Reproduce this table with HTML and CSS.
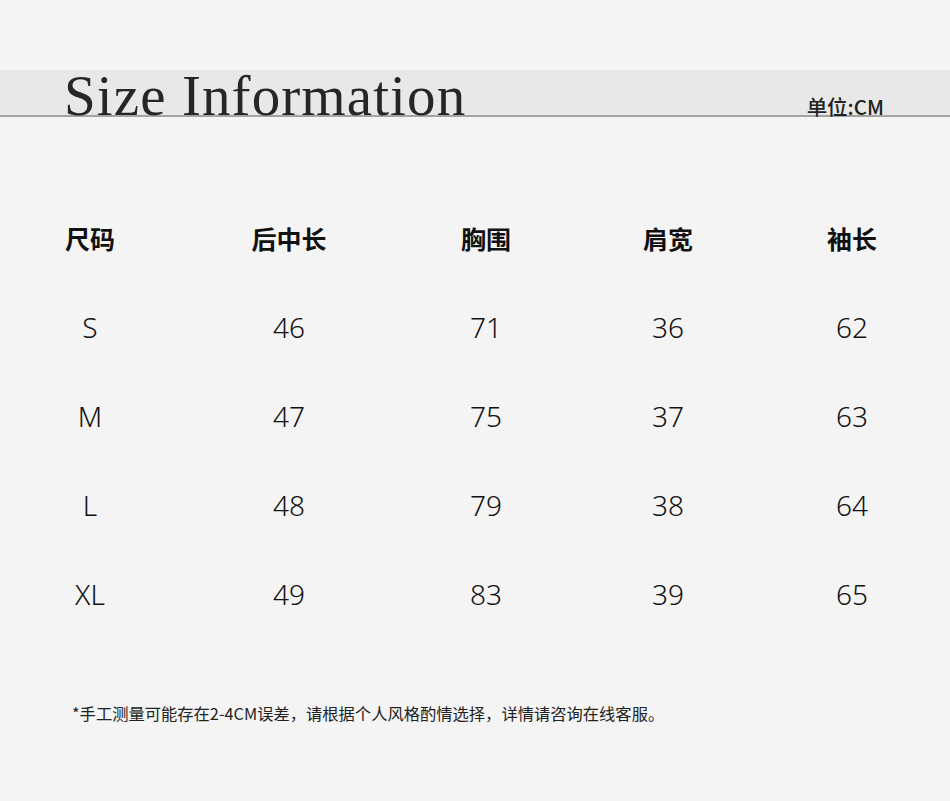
FILE: index.html
```html
<!DOCTYPE html>
<html lang="zh">
<head>
<meta charset="utf-8">
<link rel="stylesheet" href="styles.css">
</head>
<body>
<header class="band">
  <h1 class="title">Size Information</h1>
  <span class="unit">单位:CM</span>
</header>
<section class="table">
  <div class="th">尺码</div><div class="th">后中长</div><div class="th">胸围</div><div class="th">肩宽</div><div class="th">袖长</div>
  <div class="td">S</div><div class="td">46</div><div class="td">71</div><div class="td">36</div><div class="td">62</div>
  <div class="td">M</div><div class="td">47</div><div class="td">75</div><div class="td">37</div><div class="td">63</div>
  <div class="td">L</div><div class="td">48</div><div class="td">79</div><div class="td">38</div><div class="td">64</div>
  <div class="td">XL</div><div class="td">49</div><div class="td">83</div><div class="td">39</div><div class="td">65</div>
</section>
<p class="note">*手工测量可能存在2-4CM误差，请根据个人风格酌情选择，详情请咨询在线客服。</p>
</body>
</html>
```
FILE: styles.css
```css
html, body {
  margin: 0;
  padding: 0;
  background: #f4f4f4;
  width: 950px;
  height: 801px;
  overflow: hidden;
  color: #1a1a1a;
  font-family: "Noto Sans CJK SC", "Noto Sans", sans-serif;
}
.band {
  margin-top: 70px;
  height: 45px;
  background: #e8e8e8;
  border-bottom: 2px solid #a3a3a3;
  display: flex;
  align-items: flex-end;
  justify-content: space-between;
  padding: 0 66px 0 64px;
  overflow: visible;
}
.title {
  margin: 0;
  font-family: "Liberation Serif", "DejaVu Serif", serif;
  font-weight: 400;
  font-size: 57px;
  line-height: 1;
  letter-spacing: 1.1px;
  color: #262626;
  transform: translateY(9px);
}
.unit {
  font-size: 20.5px;
  font-weight: 500;
  line-height: 1;
  color: #222;
  transform: translateY(1px);
}
.table {
  margin-top: 76px;
  display: grid;
  grid-template-columns: 180px 218px 176px 188px 180px;
  grid-auto-rows: 89px;
  align-items: center;
  justify-items: center;
}
.th {
  font-size: 25px;
  font-weight: 700;
  color: #111;
}
.td {
  font-family: "Noto Sans", sans-serif;
  font-weight: 300;
  font-size: 28px;
  color: #111;
}
.note {
  margin: 63px 0 0 72px;
  font-size: 16.3px;
  color: #222;
}
```
